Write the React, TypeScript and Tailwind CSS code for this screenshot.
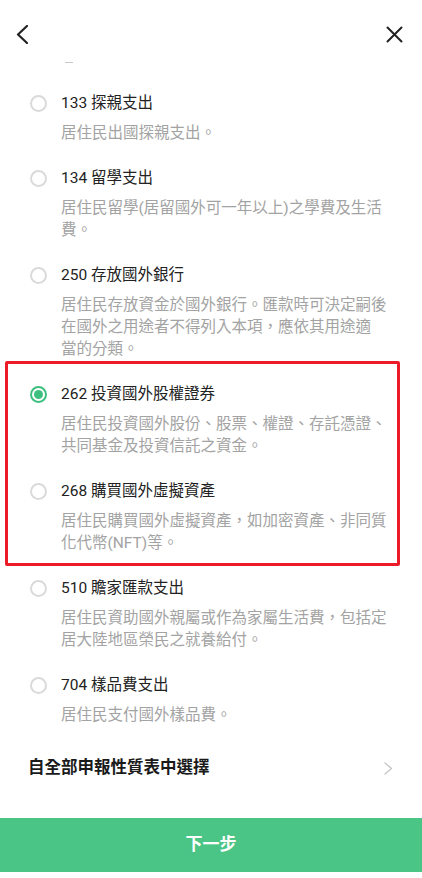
import React from "react";

type Item = { code: string; title: string; lines: string[]; checked?: boolean };

const before: Item[] = [
  { code: "133", title: "探親支出", lines: ["居住民出國探親支出。"] },
  { code: "134", title: "留學支出", lines: ["居住民留學(居留國外可一年以上)之學費及生活", "費。"] },
  {
    code: "250",
    title: "存放國外銀行",
    lines: ["居住民存放資金於國外銀行。匯款時可決定嗣後", "在國外之用途者不得列入本項，應依其用途適", "當的分類。"],
  },
];

const boxed: Item[] = [
  {
    code: "262",
    title: "投資國外股權證券",
    lines: ["居住民投資國外股份、股票、權證、存託憑證、", "共同基金及投資信託之資金。"],
    checked: true,
  },
  { code: "268", title: "購買國外虛擬資產", lines: ["居住民購買國外虛擬資產，如加密資產、非同質", "化代幣(NFT)等。"] },
];

const after: Item[] = [
  { code: "510", title: "贍家匯款支出", lines: ["居住民資助國外親屬或作為家屬生活費，包括定", "居大陸地區榮民之就養給付。"] },
  { code: "704", title: "樣品費支出", lines: ["居住民支付國外樣品費。"] },
];

function Radio({ checked }: { checked?: boolean }) {
  if (checked) {
    return (
      <div className="w-[17px] h-[17px] rounded-full border-[2px] border-[#3dbf7f] flex items-center justify-center shrink-0">
        <div className="w-[9px] h-[9px] rounded-full bg-[#3dbf7f]" />
      </div>
    );
  }
  return <div className="w-[17px] h-[17px] rounded-full border-[2px] border-[#dadada] shrink-0" />;
}

function Row({ item }: { item: Item }) {
  return (
    <div className="pl-[30px] pb-[22px]">
      <div className="flex items-center gap-[14px] h-[24px]">
        <Radio checked={item.checked} />
        <span className="text-[15.5px] leading-[24px] text-[#222222] whitespace-nowrap">
          {item.code} {item.title}
        </span>
      </div>
      <div className="mt-[7px] pl-[31px]">
        {item.lines.map((l, i) => (
          <div key={i} className="text-[15.5px] leading-[22px] text-[#a3a3a3] whitespace-nowrap">
            {l}
          </div>
        ))}
      </div>
    </div>
  );
}

export default function App() {
  return (
    <div
      className="w-[422px] h-[878px] bg-white flex flex-col overflow-hidden"
      style={{ fontFamily: "Roboto, 'Noto Sans CJK TC', 'Noto Sans', sans-serif" }}
    >
      <div className="h-[60px] shrink-0 flex justify-between items-start pl-[16px] pr-[19px] pt-[25px]">
        <svg width="12" height="19" viewBox="0 0 12 19" fill="none">
          <path d="M11 1 L2 9.5 L11 18" stroke="#222" strokeWidth="2.2" strokeLinecap="round" strokeLinejoin="round" />
        </svg>
        <svg width="17" height="17" viewBox="0 0 17 17" fill="none" className="mt-[1px]">
          <path d="M1.5 1.5 L15.5 15.5 M15.5 1.5 L1.5 15.5" stroke="#222" strokeWidth="2" strokeLinecap="round" />
        </svg>
      </div>
      <div className="flex-1 flex flex-col overflow-hidden">
        <div className="mt-[2px] ml-[65px] w-[8px] h-[1px] bg-[#c8c8c8] shrink-0" />
        <div className="mt-[28px]">
          {before.map((it) => (
            <Row key={it.code} item={it} />
          ))}
          <div className="relative">
            {boxed.map((it) => (
              <Row key={it.code} item={it} />
            ))}
            <div className="absolute left-[5px] right-[22px] top-[-21px] bottom-[10px] border-[3.5px] border-[#eb1c28] rounded-[2px] pointer-events-none" />
          </div>
          {after.map((it) => (
            <Row key={it.code} item={it} />
          ))}
        </div>
        <div className="mt-[8px] h-[24px] flex items-center justify-between pl-[28px] pr-[29px]">
          <span className="text-[16.5px] font-bold text-[#1a1a1a] leading-[24px]">自全部申報性質表中選擇</span>
          <svg width="9" height="13" viewBox="0 0 9 13" fill="none">
            <path d="M1 1 L7.5 6.5 L1 12" stroke="#c4c4c4" strokeWidth="1.3" strokeLinecap="round" strokeLinejoin="round" />
          </svg>
        </div>
      </div>
      <div className="h-[54px] shrink-0 bg-[#4bc586] flex items-center justify-center">
        <span className="text-white text-[17px] font-bold">下一步</span>
      </div>
      <div className="h-[6px] shrink-0 bg-white" />
    </div>
  );
}
